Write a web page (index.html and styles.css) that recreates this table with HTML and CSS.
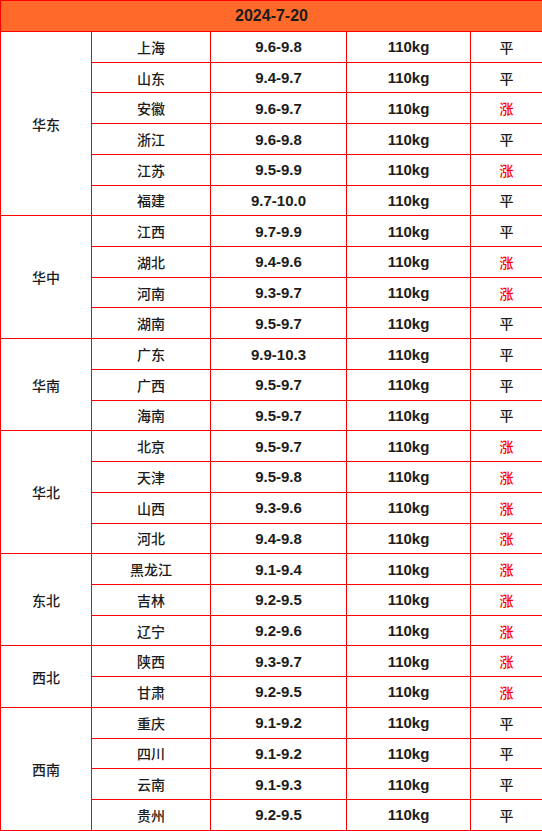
FILE: index.html
```html
<!DOCTYPE html>
<html lang="zh">
<head>
<meta charset="utf-8">
<link rel="stylesheet" href="styles.css">
</head>
<body>
<table class="price">
<colgroup>
<col class="c-region"><col class="c-prov"><col class="c-price"><col class="c-weight"><col class="c-trend">
</colgroup>
<thead>
<tr class="head"><th colspan="5">2024-7-20</th></tr>
</thead>
<tbody>
<tr><td class="region" rowspan="6">华东</td><td class="prov">上海</td><td class="num">9.6-9.8</td><td class="num">110kg</td><td class="flat">平</td></tr>
<tr><td class="prov">山东</td><td class="num">9.4-9.7</td><td class="num">110kg</td><td class="flat">平</td></tr>
<tr><td class="prov">安徽</td><td class="num">9.6-9.7</td><td class="num">110kg</td><td class="up">涨</td></tr>
<tr><td class="prov">浙江</td><td class="num">9.6-9.8</td><td class="num">110kg</td><td class="flat">平</td></tr>
<tr><td class="prov">江苏</td><td class="num">9.5-9.9</td><td class="num">110kg</td><td class="up">涨</td></tr>
<tr><td class="prov">福建</td><td class="num">9.7-10.0</td><td class="num">110kg</td><td class="flat">平</td></tr>
<tr><td class="region" rowspan="4">华中</td><td class="prov">江西</td><td class="num">9.7-9.9</td><td class="num">110kg</td><td class="flat">平</td></tr>
<tr><td class="prov">湖北</td><td class="num">9.4-9.6</td><td class="num">110kg</td><td class="up">涨</td></tr>
<tr><td class="prov">河南</td><td class="num">9.3-9.7</td><td class="num">110kg</td><td class="up">涨</td></tr>
<tr><td class="prov">湖南</td><td class="num">9.5-9.7</td><td class="num">110kg</td><td class="flat">平</td></tr>
<tr><td class="region" rowspan="3">华南</td><td class="prov">广东</td><td class="num">9.9-10.3</td><td class="num">110kg</td><td class="flat">平</td></tr>
<tr><td class="prov">广西</td><td class="num">9.5-9.7</td><td class="num">110kg</td><td class="flat">平</td></tr>
<tr><td class="prov">海南</td><td class="num">9.5-9.7</td><td class="num">110kg</td><td class="flat">平</td></tr>
<tr><td class="region" rowspan="4">华北</td><td class="prov">北京</td><td class="num">9.5-9.7</td><td class="num">110kg</td><td class="up">涨</td></tr>
<tr><td class="prov">天津</td><td class="num">9.5-9.8</td><td class="num">110kg</td><td class="up">涨</td></tr>
<tr><td class="prov">山西</td><td class="num">9.3-9.6</td><td class="num">110kg</td><td class="up">涨</td></tr>
<tr><td class="prov">河北</td><td class="num">9.4-9.8</td><td class="num">110kg</td><td class="up">涨</td></tr>
<tr><td class="region" rowspan="3">东北</td><td class="prov">黑龙江</td><td class="num">9.1-9.4</td><td class="num">110kg</td><td class="up">涨</td></tr>
<tr><td class="prov">吉林</td><td class="num">9.2-9.5</td><td class="num">110kg</td><td class="up">涨</td></tr>
<tr><td class="prov">辽宁</td><td class="num">9.2-9.6</td><td class="num">110kg</td><td class="up">涨</td></tr>
<tr><td class="region" rowspan="2">西北</td><td class="prov">陕西</td><td class="num">9.3-9.7</td><td class="num">110kg</td><td class="up">涨</td></tr>
<tr><td class="prov">甘肃</td><td class="num">9.2-9.5</td><td class="num">110kg</td><td class="up">涨</td></tr>
<tr><td class="region" rowspan="4">西南</td><td class="prov">重庆</td><td class="num">9.1-9.2</td><td class="num">110kg</td><td class="flat">平</td></tr>
<tr><td class="prov">四川</td><td class="num">9.1-9.2</td><td class="num">110kg</td><td class="flat">平</td></tr>
<tr><td class="prov">云南</td><td class="num">9.1-9.3</td><td class="num">110kg</td><td class="flat">平</td></tr>
<tr><td class="prov">贵州</td><td class="num">9.2-9.5</td><td class="num">110kg</td><td class="flat">平</td></tr>
</tbody>
</table>
</body>
</html>
```
FILE: styles.css
```css
html, body {
  margin: 0;
  padding: 0;
  background: #ffffff;
}
.price {
  width: 542px;
  border-collapse: collapse;
  table-layout: fixed;
  font-family: "Liberation Sans", "Noto Sans CJK SC", sans-serif;
  color: #1c1c1c;
}
.c-region { width: 91px; }
.c-prov { width: 119px; }
.c-price { width: 136px; }
.c-weight { width: 124px; }
.c-trend { width: 72px; }
.price th, .price td {
  border: 1px solid #ff0000;
  padding: 0;
  text-align: center;
  vertical-align: middle;
}
.head th {
  height: 30px;
  background: #ff6a2b;
  font-size: 16px;
  font-weight: bold;
  color: #1c1c1c;
}
.price tbody tr {
  height: 30.73px;
}
.region, .prov, .flat {
  font-family: "Noto Sans CJK SC", sans-serif;
  font-size: 14px;
  font-weight: 500;
}
.num {
  font-size: 15px;
  font-weight: bold;
}
.up {
  font-family: "Noto Sans CJK SC", sans-serif;
  font-size: 14px;
  font-weight: 500;
  color: #ff0000;
}
```
